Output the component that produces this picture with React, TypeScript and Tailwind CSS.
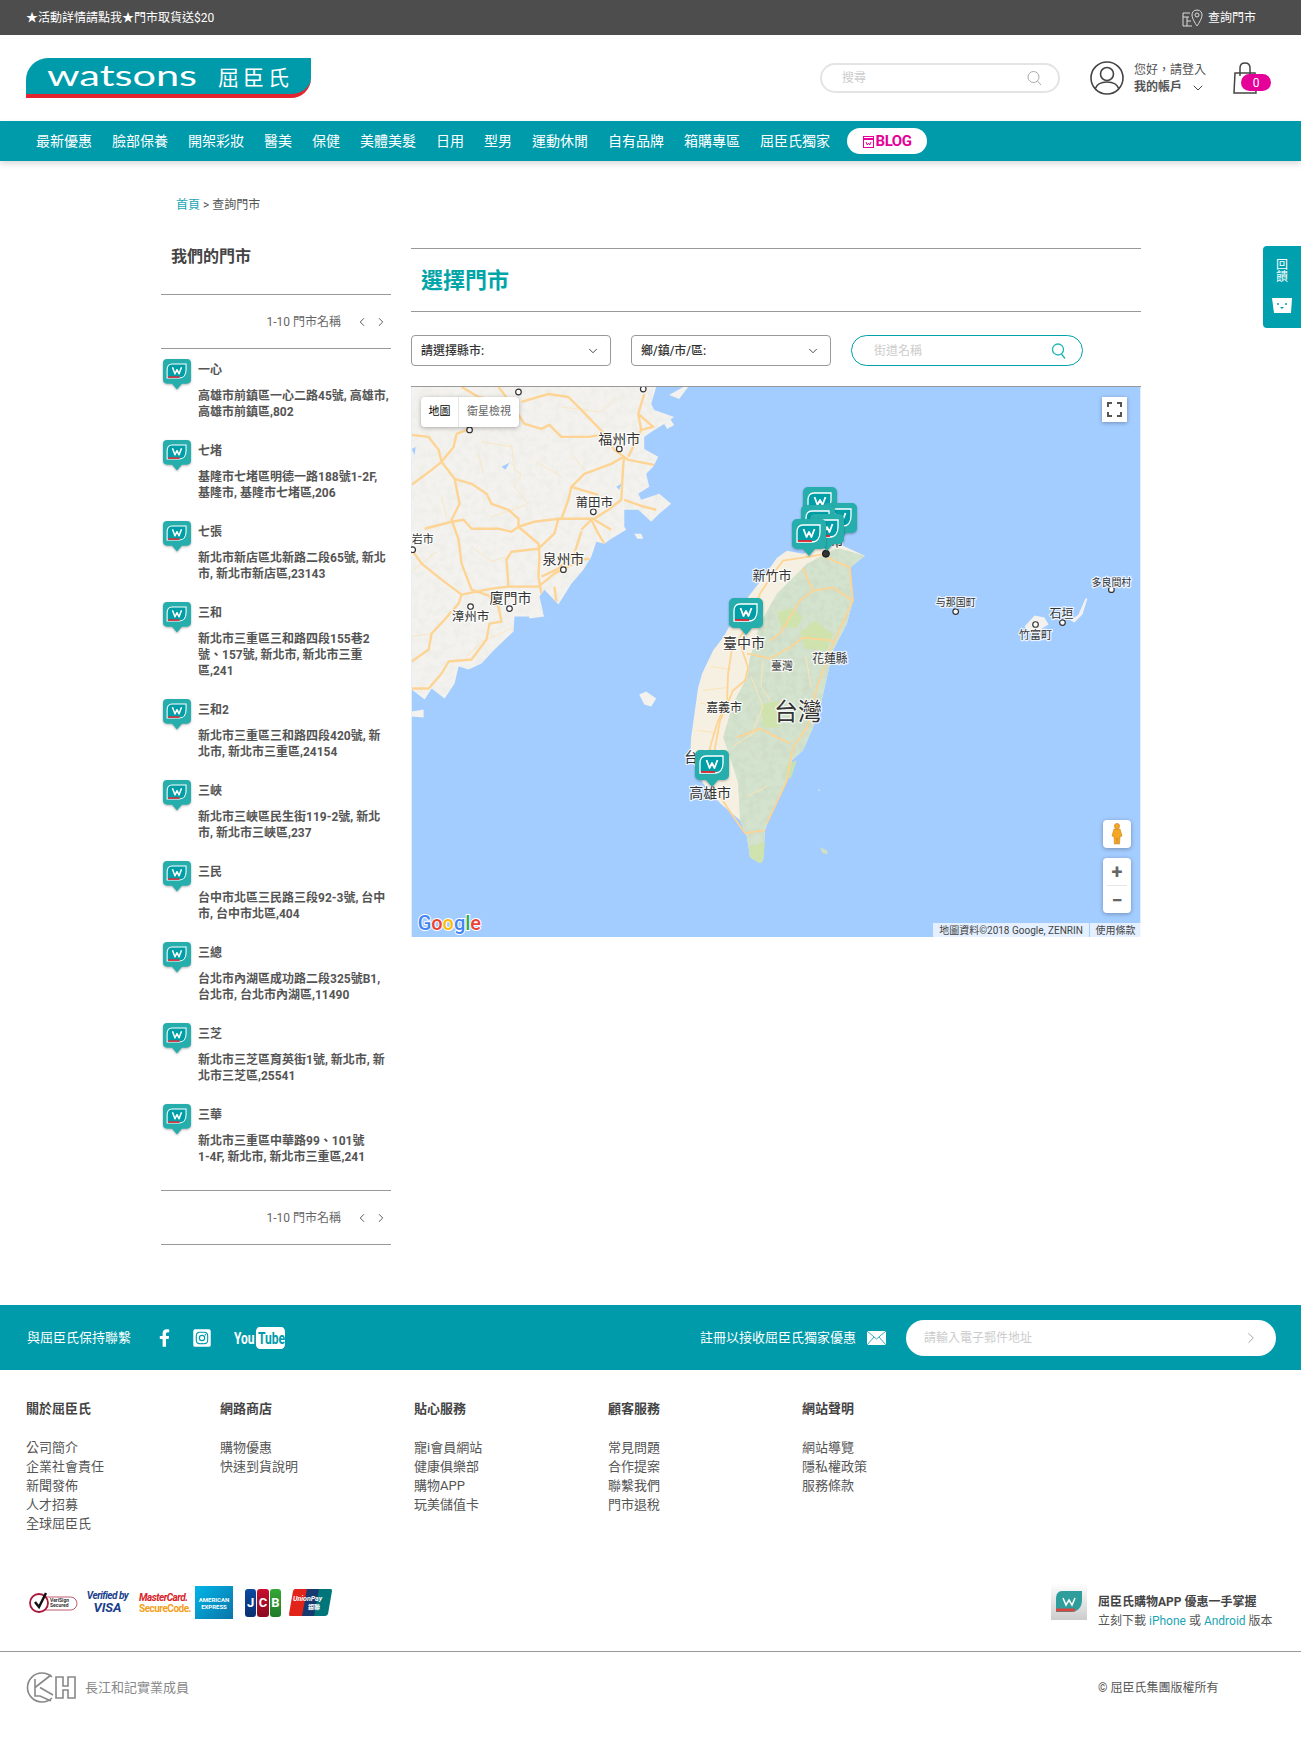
import { ChevronDown, ChevronLeft, ChevronRight } from "lucide-react";
import { FaFacebookF, FaInstagramSquare } from "react-icons/fa";

const stores = [
  { name: "一心", address: "高雄市前鎮區一心二路45號, 高雄市, 高雄市前鎮區,802" },
  { name: "七堵", address: "基隆市七堵區明德一路188號1-2F, 基隆市, 基隆市七堵區,206" },
  { name: "七張", address: "新北市新店區北新路二段65號, 新北市, 新北市新店區,23143" },
  { name: "三和", address: "新北市三重區三和路四段155巷2號、157號, 新北市, 新北市三重區,241" },
  { name: "三和2", address: "新北市三重區三和路四段420號, 新北市, 新北市三重區,24154" },
  { name: "三峽", address: "新北市三峽區民生街119-2號, 新北市, 新北市三峽區,237" },
  { name: "三民", address: "台中市北區三民路三段92-3號, 台中市, 台中市北區,404" },
  { name: "三總", address: "台北市內湖區成功路二段325號B1, 台北市, 台北市內湖區,11490" },
  { name: "三芝", address: "新北市三芝區育英街1號, 新北市, 新北市三芝區,25541" },
  { name: "三華", address: "新北市三重區中華路99、101號 1-\u20604F, 新北市, 新北市三重區,241" },
];

const navItems = ["最新優惠", "臉部保養", "開架彩妝", "醫美", "保健", "美體美髮", "日用", "型男", "運動休閒", "自有品牌", "箱購專區", "屈臣氏獨家"];

const footerColumns = [
  { title: "關於屈臣氏", links: ["公司簡介", "企業社會責任", "新聞發佈", "人才招募", "全球屈臣氏"] },
  { title: "網路商店", links: ["購物優惠", "快速到貨說明"] },
  { title: "貼心服務", links: ["寵i會員網站", "健康俱樂部", "購物APP", "玩美儲值卡"] },
  { title: "顧客服務", links: ["常見問題", "合作提案", "聯繫我們", "門市退稅"] },
  { title: "網站聲明", links: ["網站導覽", "隱私權政策", "服務條款"] },
];

// map labels: text, x, y (centre), font size
const mapLabels: [string, number, number, number][] = [
  ["福州市", 208, 52, 14],
  ["莆田市", 183, 116, 12.500],
  ["泉州市", 152, 172, 14],
  ["廈門市", 99, 211, 14],
  ["漳州市", 59, 230, 12.500],
  ["岩市", 11, 153, 11],
  ["新竹市", 361, 189, 13],
  ["台北市", 413, 155, 13],
  ["臺中市", 333, 256, 14],
  ["花蓮縣", 419, 272, 12],
  ["臺灣", 371, 280, 11],
  ["嘉義市", 313, 322, 12],
  ["台灣", 387, 326, 24],
  ["台南市", 294, 371, 14],
  ["高雄市", 299, 407, 14],
  ["与那国町", 545, 216, 10],
  ["多良間村", 701, 196, 10],
  ["石垣", 651, 227, 12],
  ["竹富町", 625, 249, 11],
];

const mapDots = [
  [208, 62], [182, 125], [152, 183], [98, 222], [59, 220], [58, 43], [107, 5], [232, 2], [1, 163],
  [701, 203], [545, 225], [652, 236], [625, 238],
];

const chinaCoast =
  "M0 0H245L240 17L243 23L263 30L253 37L240 45L233 50L233 62L247 70L242 80L235 87L238 100L227 107L230 113L248 107L260 117L248 127L240 135L227 123L213 123L213 140L215 143L200 152L193 157L185 155L180 170L172 183L160 197L147 218L133 203L128 210L132 227L117 230L103 230L102 245L83 263L70 277L57 283L47 280L43 297L33 312L20 302L13 313L0 303Z";

const mountains =
  "M396 177L426 161L454 169L439 181L442 214L436 237L422 264L416 291L409 321L402 341L392 364L381 374L376 394L362 421L354 444L352 474L349 477L339 471L336 451L329 434L327 397L319 371L312 351L322 317L336 291L339 271L349 237L366 207Z";

const roads = [
  "M0 48L17 50L27 63L30 75L43 92L48 117L40 133L47 153L50 177L60 203L80 210",
  "M0 98L20 83L30 75L42 60L45 47L58 42",
  "M43 92L60 97L75 107L80 117L97 123L107 132L107 140",
  "M13 142L40 135L52 133L60 142L87 142L100 145L107 140L123 135L147 132L170 132L183 132L197 123L210 113L212 77L213 70",
  "M107 140L127 157L128 170L127 190L130 207",
  "M147 132L143 147L127 162L100 165L95 173L97 200",
  "M150 132L157 113L160 100L173 87L200 77L212 70",
  "M160 100L187 108",
  "M0 163L10 177L30 193L50 208L47 217L33 233L20 247L17 263L0 275",
  "M50 208L80 202L97 200L127 200L143 187L170 173L178 172",
  "M170 143L180 133L187 147L193 157M183 133L200 143",
  "M170 145L163 167L147 182L130 190",
  "M87 0L100 17L113 37L130 42L138 38L150 50L177 50L190 48",
  "M50 0L67 10L87 14M110 15L137 7L157 10L170 23L193 47L203 63L217 73L243 78",
  "M233 7L227 27L230 43L217 70M227 27L242 40L230 43",
  "M213 113L233 120L245 123",
  "M78 210L87 220L90 235L78 237L75 253L60 273L37 275L30 287L17 302L0 302",
  "M143 200L145 215",
];

const minorRoads = [
  "M67 67L72 87M100 57L103 83L110 87L103 100L117 117",
  "M160 67L173 83M70 55L100 60M125 75L150 90M80 130L115 118",
  "M0 185L25 165M60 160L80 175L95 170M105 240L70 255L55 270",
  "M30 110L35 130M0 250L20 247M150 20L190 25L205 10",
];

const taiwanRoads = [
  "M416 167L392 171L372 174L362 187L349 207L336 241L321 261L317 287L316 314L306 337L299 361L301 397L316 421L327 437L334 447L354 444",
  "M329 257L337 281L334 294L322 304L309 334L304 361L302 377",
  "M336 267L359 272L379 261L392 251L422 254",
  "M392 181L402 204L389 214L369 247L359 254",
  "M416 171L439 181L442 214L422 201L402 204",
  "M442 214L419 264L406 301L396 341L382 361L376 394L356 437",
  "M326 351L349 342L366 351L379 357",
];

const taiwanMinorRoads = [
  "M292 304L316 301M289 317L316 320M286 344L309 347M300 280L320 283M340 290L352 320L340 350",
  "M352 274L350 300L360 315M322 360L345 345M336 410L356 400M395 270L400 300",
];

function Marker({ size }: { size: number }) {
  return (
    <svg width={size} height={(size * 38) / 34} viewBox="0 0 34 38" className="block drop-shadow-[0_1px_1px_rgba(0,0,0,.3)]">
      <path d="M5 0H29A5 5 0 0 1 34 5V25A5 5 0 0 1 29 30H23L17 37L11 30H5A5 5 0 0 1 0 25V5A5 5 0 0 1 5 0Z" fill="#26aeac" />
      <path d="M11 6H28V13C28 19 25 23 20 23H5V13C5 9 7 6 11 6Z" fill="#009ea6" stroke="#fff" strokeWidth="1.300" />
      <path d="M6 22H20" stroke="#e4242e" strokeWidth="1.800" />
      <path d="M11.500 10L14.500 18L17 13L19.500 18L22.500 10" fill="none" stroke="#fff" strokeWidth="1.800" strokeLinejoin="round" />
    </svg>
  );
}

function MapCanvas() {
  return (
    <svg viewBox="0 0 730 551" className="absolute inset-0 h-full w-full">
      <defs>
        <filter id="hills" x="0" y="0" width="100%" height="100%">
          <feTurbulence type="fractalNoise" baseFrequency="0.14" numOctaves="3" seed="4" />
          <feColorMatrix values="0 0 0 0 0.5 0 0 0 0 0.56 0 0 0 0 0.48 0 0 0 1.500 -0.62" />
        </filter>
        <clipPath id="china">
          <path d={chinaCoast} />
        </clipPath>
        <clipPath id="taiwan">
          <path d={mountains} />
        </clipPath>
      </defs>
      <rect width="730" height="551" fill="#a3ccff" />
      {/* mainland */}
      <path d={chinaCoast} fill="#f3f2ee" />
      <g clipPath="url(#china)">
        <rect width="270" height="320" filter="url(#hills)" opacity="0.14" />
        <g fill="none" stroke="#f8e7c4" strokeWidth="1">
          {minorRoads.map((d) => (
            <path key={d} d={d} />
          ))}
        </g>
        <g fill="none" stroke="#fdd493" strokeWidth="2.400" strokeLinejoin="round">
          {roads.map((d) => (
            <path key={d} d={d} />
          ))}
        </g>
        <path d="M90 80L98 76L94 83Z M0 62L4 60L3 68Z M205 100L210 97L208 103Z" fill="#a3ccff" />
      </g>
      {/* islands */}
      <path
        d="M258 8L272 0H277L268 12ZM223 147L230 147L232 152L226 152ZM228 308L235 305L245 312L240 320L233 318ZM0 325L12 323L12 331L0 330ZM117 228L128 221L133 230L118 232ZM253 37L259 32L263 38L256 42ZM614 240L624 229L634 231L638 238L628 244L618 244ZM660 234L668 228L675 212L677 212L672 228L664 236ZM407 403L409 404L408 405Z"
        fill="#f3f2ee"
      />
      <path d="M409 461L416 464L417 468L412 467Z" fill="#cfe0c4" />
      {/* taiwan */}
      <path
        d="M416 157L432 159L454 169L439 181L442 214L436 237L422 264L416 291L409 321L402 341L392 364L381 374L376 394L362 421L354 444L352 474L349 477L339 471L336 451L329 434L309 417L292 397L279 371L280 351L287 301L291 287L302 264L312 251L329 221L352 191L366 171L376 164L392 167Z"
        fill="#f6f0e2"
      />
      <path d={mountains} fill="#d4e3cd" />
      <g clipPath="url(#taiwan)">
        <rect x="300" y="150" width="160" height="330" filter="url(#hills)" opacity="0.42" />
      </g>
      <path
        d="M366 226L380 221L392 230L386 241L370 241ZM389 246L404 234L422 248L416 264L394 262ZM350 318L368 314L369 341L352 341ZM376 378L386 374L380 392L375 392ZM338 460L354 456L352 475L349 477L339 471Z"
        fill="#cfe3a8"
        opacity="0.85"
      />
      <g fill="none" stroke="#fce3b6" strokeWidth="1">
        {taiwanMinorRoads.map((d) => (
          <path key={d} d={d} />
        ))}
      </g>
      <g fill="none" stroke="#fdd493" strokeWidth="1.800" strokeLinejoin="round">
        {taiwanRoads.map((d) => (
          <path key={d} d={d} />
        ))}
      </g>
      {mapDots.map(([x, y]) => (
        <circle key={`${x}-${y}`} cx={x} cy={y} r="2.800" fill="#fff" stroke="#333" strokeWidth="1.200" />
      ))}
      <circle cx="415" cy="167" r="3.500" fill="#333" stroke="#111" />
      {mapLabels.map(([label, x, y, size]) => (
        <text
          key={label}
          x={x}
          y={y}
          fontSize={size}
          textAnchor="middle"
          dominantBaseline="central"
          fill="#333"
          stroke="#fff"
          strokeOpacity="0.8"
          strokeWidth="2.500"
          strokeLinejoin="round"
          className="[paint-order:stroke]"
        >
          {label}
        </text>
      ))}
      <text x="6" y="544" fontSize="20" fontWeight="500" stroke="#fff" strokeWidth="2" className="[paint-order:stroke]">
        <tspan fill="#4285f4">G</tspan>
        <tspan fill="#ea4335">o</tspan>
        <tspan fill="#fbbc05">o</tspan>
        <tspan fill="#4285f4">g</tspan>
        <tspan fill="#34a853">l</tspan>
        <tspan fill="#ea4335">e</tspan>
      </text>
    </svg>
  );
}

function StoreMap() {
  return (
    <div className="relative mt-5 h-[551px] w-[730px] overflow-hidden border-t border-[#999]">
      <MapCanvas />
      {/* markers */}
      <div className="absolute left-[318px] top-[211px]"><Marker size={34} /></div>
      <div className="absolute left-[392px] top-[100px]"><Marker size={34} /></div>
      <div className="absolute left-[412px] top-[116px]"><Marker size={34} /></div>
      <div className="absolute left-[390px] top-[118px]"><Marker size={34} /></div>
      <div className="absolute left-[399px] top-[127px]"><Marker size={34} /></div>
      <div className="absolute left-[381px] top-[132px]"><Marker size={34} /></div>
      <div className="absolute left-[284px] top-[363px]"><Marker size={34} /></div>
      {/* map controls */}
      <div className="absolute left-[10px] top-[10px] flex h-[30px] w-[98px] items-center rounded-sm bg-white text-[11px] shadow-[0_1px_4px_rgba(0,0,0,.3)]">
        <span className="flex h-full w-[38px] items-center justify-center border-r border-[#e6e6e6] text-black">地圖</span>
        <span className="flex-1 text-center text-[#666]">衛星檢視</span>
      </div>
      <div className="absolute left-[691px] top-[10px] flex h-[25px] w-[25px] items-center justify-center bg-white shadow-[0_1px_4px_rgba(0,0,0,.3)]">
        <svg width="15" height="15" viewBox="0 0 15 15" fill="none" stroke="#555" strokeWidth="2">
          <path d="M1 5V1H5M10 1H14V5M14 10V14H10M5 14H1V10" />
        </svg>
      </div>
      <div className="absolute left-[692px] top-[433px] flex h-[28px] w-[28px] items-center justify-center rounded-sm bg-white shadow-[0_1px_4px_rgba(0,0,0,.3)]">
        <svg width="12" height="22" viewBox="0 0 12 22" fill="#f5a623" stroke="#c77f10" strokeWidth="0.600">
          <circle cx="6" cy="3" r="2.600" />
          <path d="M3 6H9L11 13L9 13.500L8.500 21H6.500L6 15L5.500 21H3.500L3 13.500L1 13Z" />
        </svg>
      </div>
      <div className="absolute left-[692px] top-[471px] flex h-[55px] w-[28px] flex-col items-center rounded-sm bg-white text-[#666] shadow-[0_1px_4px_rgba(0,0,0,.3)]">
        <span className="flex h-[27px] w-full items-center justify-center text-[20px] font-bold leading-none">+</span>
        <span className="h-px w-[20px] bg-[#e6e6e6]" />
        <span className="flex h-[27px] w-full items-center justify-center text-[20px] font-bold leading-none">−</span>
      </div>
      <div className="absolute bottom-0 right-0 flex h-[14px] text-[10px] leading-[16px] text-[#444]">
        <span className="w-[156px] bg-white/70 text-center">地圖資料©2018 Google, ZENRIN</span>
        <span className="ml-px w-[51px] bg-white/70 text-center">使用條款</span>
      </div>
    </div>
  );
}

function Pager() {
  return (
    <div className="flex h-[53px] items-center justify-end gap-[14px] pr-[3px] text-xs text-[#666]">
      <span>1-10 門市名稱</span>
      <span className="flex gap-[5px] text-[#444]">
        <ChevronLeft size={14} strokeWidth={1.500} />
        <ChevronRight size={14} strokeWidth={1.500} />
      </span>
    </div>
  );
}

function Sidebar() {
  return (
    <aside className="w-[230px]">
      <h2 className="h-[46px] pl-[10px] pt-px text-base font-bold leading-4 text-[#444]">我們的門市</h2>
      <div className="border-y border-[#999]">
        <Pager />
      </div>
      <ul className="pb-[5px] pt-[10px]">
        {stores.map((store) => (
          <li key={store.name} className="flex pb-5 pl-[2px]">
            <div className="w-[35px] shrink-0">
              <Marker size={28} />
            </div>
            <div className="min-w-0 pt-[3px] text-xs font-bold leading-4 text-[#555]">
              <p className="mb-[10px]">{store.name}</p>
              <p>{store.address}</p>
            </div>
          </li>
        ))}
      </ul>
      <div className="border-y border-[#999]">
        <Pager />
      </div>
    </aside>
  );
}

function Logo() {
  return (
    <div className="relative h-10 w-[285px] overflow-hidden rounded-br-[20px] rounded-tl-[22px] border-b-[4px] border-[#e4242e] bg-[#009baa]">
      <svg viewBox="0 0 285 36" className="absolute inset-0 h-9 w-[285px]">
        <text x="21" y="28" fontSize="29" fill="#fff" textLength="150" lengthAdjust="spacingAndGlyphs" style={{ fontFamily: "Lato", fontWeight: 400 }}>
          watsons
        </text>
        <text x="192" y="27" fontSize="21" fill="#fff" textLength="71" style={{ fontFamily: "Noto Sans CJK TC" }}>
          屈臣氏
        </text>
      </svg>
    </div>
  );
}

function Header() {
  return (
    <>
      <div className="flex h-[35px] items-center justify-between bg-[#4d4d4d] pl-[26px] pr-[45px] text-xs text-white">
        <span>★活動詳情請點我★門市取貨送$20</span>
        <span className="flex items-center gap-[5px]">
          <svg width="21" height="18" viewBox="0 0 21 18" fill="none" stroke="#ddd" strokeWidth="1">
            <path d="M8 4H1V17H10M1 8H7M5 8V17M5 12H9" />
            <path d="M15 1C11.500 1 10 3.500 10 6C10 10 15 17 15 17C15 17 20 10 20 6C20 3.500 18.500 1 15 1Z" />
            <circle cx="15" cy="6" r="2" />
          </svg>
          查詢門市
        </span>
      </div>
      <div className="flex h-[86px] items-center px-[26px]">
        <Logo />
        <div className="ml-auto flex h-[30px] w-[240px] items-center justify-between rounded-full border-2 border-[#e4e4e4] pl-5 pr-[16px] text-xs text-[#ccc]">
          搜尋
          <svg width="15" height="16" viewBox="0 0 15 16" fill="none" stroke="#aaa" strokeWidth="1">
            <circle cx="6.500" cy="7" r="5.500" />
            <path d="M10.500 11L14 15" />
          </svg>
        </div>
        <svg width="34" height="34" viewBox="0 0 34 34" fill="none" stroke="#444" strokeWidth="1.600" className="ml-[30px]">
          <circle cx="17" cy="17" r="16" />
          <circle cx="17" cy="13" r="6.500" />
          <path d="M5 28C7 22 12 21 17 21C22 21 27 22 29 28" />
        </svg>
        <div className="ml-[10px] w-[99px] pt-[2px] text-xs leading-[17px] text-[#555]">
          <p>您好，請登入</p>
          <p className="flex items-center gap-[8px] font-bold">
            我的帳戶
            <ChevronDown size={16} strokeWidth={1.500} className="text-[#444]" />
          </p>
        </div>
        <div className="relative mr-[4px] h-8 w-[38px]">
          <svg width="24" height="32" viewBox="0 0 24 32" fill="none" stroke="#444" strokeWidth="1.500">
            <path d="M2 11H22L23 31H1Z" />
            <path d="M7 14V6C7 3 9 1 12 1C15 1 17 3 17 6V14" />
          </svg>
          <span className="absolute left-2 top-3 flex h-[17px] w-[30px] items-center justify-center rounded-full bg-[#e6009a] text-xs text-white">0</span>
        </div>
      </div>
      <nav className="relative flex h-10 items-center gap-5 bg-[#009baa] pl-9 text-sm text-white shadow-[0_3px_6px_rgba(0,0,0,.15)]">
        {navItems.map((item) => (
          <span key={item}>{item}</span>
        ))}
        <span className="-ml-[3px] flex h-[26px] w-20 items-center justify-center gap-[2px] rounded-full bg-white pt-px text-[15px] font-bold tracking-[-0.500px] text-[#e6009a]">
          <svg width="11" height="12" viewBox="0 0 11 12" fill="none" stroke="#e6009a" strokeWidth="1">
            <rect x="0.500" y="0.500" width="10" height="11" />
            <path d="M0.500 3H10.500" strokeWidth="2" />
            <path d="M3 6L4.300 9L5.500 7L6.700 9L8 6" />
          </svg>
          BLOG
        </span>
      </nav>
    </>
  );
}

function PaymentLogos() {
  return (
    <div className="mt-[6px] flex items-center">
      <div className="relative flex h-[26px] w-[49px] items-center">
        <svg width="49" height="26" viewBox="0 0 49 26" fill="none">
          <rect x="10" y="7" width="38" height="13" rx="6.500" stroke="#b0304a" strokeWidth="0.800" />
          <circle cx="10" cy="13" r="9" fill="#fff" stroke="#a8163a" strokeWidth="1.800" />
          <path d="M6 12L10 17L17 3" stroke="#111" strokeWidth="2.500" />
        </svg>
        <span className="absolute left-[21px] top-[8px] text-[5px] font-bold leading-[5.500px] text-[#333]">VeriSign Secured</span>
      </div>
      <div className="ml-[7px] w-[45px] text-center font-bold italic leading-none text-[#1a3e8c]">
        <p className="whitespace-nowrap text-[10px] tracking-[-0.500px]">Verified by</p>
        <p className="text-[13px]">VISA</p>
      </div>
      <div className="ml-[9px] w-[49px] text-[10px] font-bold leading-[11px] tracking-[-0.500px]">
        <p className="whitespace-nowrap italic text-[#d8232a]">MasterCard.</p>
        <p className="whitespace-nowrap text-[#f5a01a]">SecureCode.</p>
      </div>
      <div className="ml-[7px] flex h-[33px] w-[38px] flex-col items-center justify-center overflow-hidden bg-[linear-gradient(135deg,#00b6e8,#0b74a8)] text-[6px] font-bold leading-[7px] text-white">
        <span>AMERICAN</span>
        <span>EXPRESS</span>
      </div>
      <div className="ml-3 flex h-7 w-9 gap-px text-center text-[13px] font-bold leading-7 text-white">
        <span className="flex-1 rounded-[3px] bg-[linear-gradient(#0a4aa0,#0a2f70)]">J</span>
        <span className="flex-1 rounded-[3px] bg-[linear-gradient(#c8102e,#8a0a20)]">C</span>
        <span className="flex-1 rounded-[3px] bg-[linear-gradient(#35a836,#1f7a2a)]">B</span>
      </div>
      <div className="relative ml-2 h-[27px] w-[43px]">
        <svg width="43" height="27" viewBox="0 0 43 27" className="absolute inset-0">
          <path d="M6 0H20L15 27H1Q0 27 0 25L4 2Q5 0 6 0Z" fill="#e2231a" />
          <path d="M18 0H32L27 27H13Z" fill="#16396f" />
          <path d="M30 0H42Q43 0 43 2L39 25Q38 27 36 27H25Z" fill="#00757a" />
        </svg>
        <span className="absolute left-[4px] top-[6px] whitespace-nowrap text-[7px] font-bold italic text-white">UnionPay</span>
        <span className="absolute left-[19px] top-[14px] text-[6px] font-bold text-white">銀聯</span>
      </div>
    </div>
  );
}

function Footer() {
  return (
    <footer>
      <div className="flex h-[65px] items-center bg-[#009baa] pl-[27px] pr-[25px] text-[13px] text-white">
        <span>與屈臣氏保持聯繫</span>
        <FaFacebookF className="ml-[28px] h-[18px] w-[11px]" />
        <FaInstagramSquare className="ml-[22px] h-5 w-5" />
        <svg width="51" height="22" viewBox="0 0 72 22" preserveAspectRatio="none" className="ml-[22px]">
          <text x="0" y="17" fontSize="17" fontWeight="700" fill="#fff">You</text>
          <rect x="31" y="0" width="41" height="22" rx="5" fill="#fff" />
          <text x="34" y="17" fontSize="17" fontWeight="700" fill="#009baa">Tube</text>
        </svg>
        <span className="ml-auto">註冊以接收屈臣氏獨家優惠</span>
        <svg width="19" height="14" viewBox="0 0 19 14" className="ml-[11px]">
          <rect width="19" height="14" fill="#fff" />
          <path d="M0 0L9.500 8L19 0M0 14L7 6M19 14L12 6" fill="none" stroke="#009baa" strokeWidth="0.800" />
        </svg>
        <div className="ml-5 flex h-9 w-[370px] items-center justify-between rounded-full bg-white pl-[18px] pr-4 text-xs text-[#ccc]">
          請輸入電子郵件地址
          <ChevronRight size={18} strokeWidth={1} className="text-[#888]" />
        </div>
      </div>
      <div className="flex h-[210px] pl-[26px] pt-[30px] text-[13px] text-[#555]">
        {footerColumns.map((col) => (
          <div key={col.title} className="w-[194px]">
            <h3 className="mb-5 font-bold leading-[18px] text-[#444]">{col.title}</h3>
            <ul className="leading-[19px]">
              {col.links.map((link) => (
                <li key={link}>{link}</li>
              ))}
            </ul>
          </div>
        ))}
      </div>
      <div className="flex h-[72px] items-start justify-between border-b border-[#999] pl-[29px] pr-[25px] text-xs text-[#555]">
        <PaymentLogos />
        <div className="flex w-[225px] items-start gap-[11px] pt-[3px]">
          <div className="flex h-[37px] w-9 shrink-0 items-center justify-center bg-[linear-gradient(#fff,#ccc)]">
            <svg width="28" height="24" viewBox="0 0 28 24">
              <path d="M7 1H27V10C27 18 22 22 16 22H1V9C1 4 3 1 7 1Z" fill="#2f9d9c" />
              <path d="M1 20H20" stroke="#d8443f" strokeWidth="3" />
              <path d="M8 8L11 15L14 10L17 15L20 8" fill="none" stroke="#fff" strokeWidth="1.500" />
            </svg>
          </div>
          <div className="pt-[10px] leading-[19px]">
            <p className="font-bold text-[#444]">屈臣氏購物APP 優惠一手掌握</p>
            <p className="whitespace-nowrap">
              立刻下載 <span className="text-[#1aa5b5]">iPhone</span> 或 <span className="text-[#1aa5b5]">Android</span> 版本
            </p>
          </div>
        </div>
      </div>
      <div className="flex h-[101px] items-start justify-between pl-[26px] pr-[25px] pt-5 text-xs text-[#555]">
        <div className="flex items-center gap-[9px] text-[13px] text-[#888]">
          <svg width="50" height="31" viewBox="0 0 50 31" fill="none" stroke="#888" strokeWidth="1.600">
            <path d="M26 5A14.500 14.500 0 1 0 26 26" />
            <path d="M9 7V24H14L25 29M9 15.500L25 3M14 15.500L27 23" />
            <path d="M30 5H37V14H42V5H49V26H42V18H37V26H30Z" />
          </svg>
          長江和記實業成員
        </div>
        <span className="w-[178px] pt-2">© 屈臣氏集團版權所有</span>
      </div>
    </footer>
  );
}

export default function App() {
  return (
    <div className="relative w-[1301px] bg-white [font-family:Roboto,'Noto_Sans_CJK_TC',sans-serif]">
      <Header />
      <div className="h-[87px] pl-[176px] pt-[35px] text-xs leading-[18px] text-[#555]">
        <span className="text-[#1aa5b5]">首頁</span> &gt; 查詢門市
      </div>
      <main className="flex gap-5 pb-[60px] pl-[161px]">
        <Sidebar />
        <section className="w-[730px]">
          <div className="flex h-[64px] items-center border-y border-[#999] pl-[10px] text-[22px] font-bold text-[#00a5a8]">選擇門市</div>
          <div className="mt-[23px] flex gap-5 text-xs font-medium text-[#333]">
            <div className="flex h-[31px] w-[200px] items-center justify-between rounded border border-[#999] pl-[9px] pr-[10px]">
              請選擇縣市:
              <ChevronDown size={14} strokeWidth={1.500} />
            </div>
            <div className="flex h-[31px] w-[200px] items-center justify-between rounded border border-[#999] pl-[9px] pr-[10px]">
              鄉/鎮/市/區:
              <ChevronDown size={14} strokeWidth={1.500} />
            </div>
            <div className="flex h-[31px] w-[232px] items-center justify-between rounded-full border border-[#00a0a8] pl-[22px] pr-[15px] font-normal text-[#ccc]">
              街道名稱
              <svg width="16" height="16" viewBox="0 0 16 16" fill="none" stroke="#1fb5b5" strokeWidth="1.300">
                <circle cx="7" cy="6.500" r="5.500" />
                <path d="M10.500 11L14 15.500" />
              </svg>
            </div>
          </div>
          <StoreMap />
        </section>
      </main>
      <Footer />
      {/* feedback tab */}
      <div className="absolute right-0 top-[246px] flex h-[82px] w-[38px] flex-col items-center rounded-l bg-[#00a0ae] pt-[13px] text-xs leading-3 text-white">
        <span>回</span>
        <span>饋</span>
        <svg width="20" height="15" viewBox="0 0 20 15" className="mt-[15px]">
          <path d="M0 0H20L19 15H2Z" fill="#fff" />
          <circle cx="6" cy="6" r="1" fill="#00a0ae" />
          <circle cx="14" cy="6" r="1" fill="#00a0ae" />
          <path d="M8 9H12L10 11Z" fill="#00a0ae" />
        </svg>
      </div>
    </div>
  );
}
